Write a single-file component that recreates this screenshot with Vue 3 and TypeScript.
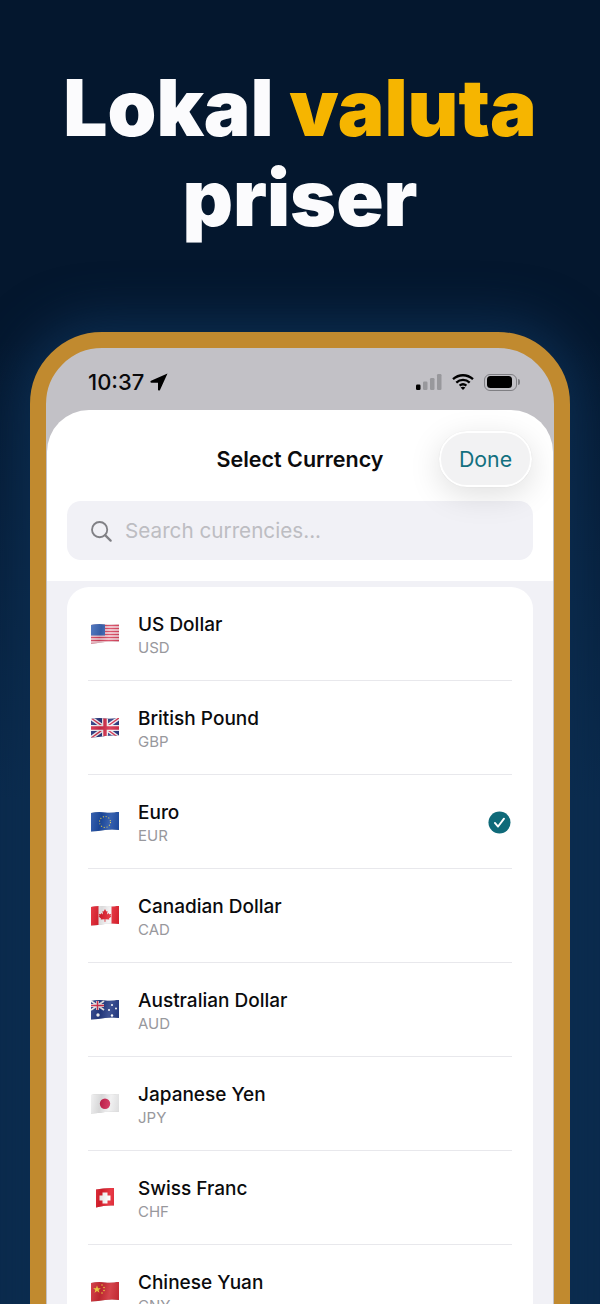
<template>
  <div class="screen">
    <h1 class="headline">Lokal <span class="accent">valuta</span><br />priser</h1>

    <div class="phone">
      <div class="status-bar">
        <div class="time">
          <span>10:37</span>
          <svg class="location" viewBox="0 0 18 18"><path d="M17.500.5 1 7.800c-1 .5-.7 2 .4 2H8v6.700c0 1.100 1.500 1.400 2 .4Z" fill="#000" /></svg>
        </div>
        <div class="status-icons">
          <svg class="signal" viewBox="0 0 26 16">
            <rect x="0" y="10.500" width="4.500" height="5.500" rx="1.200" fill="#000" />
            <rect x="7" y="7.500" width="4.500" height="8.500" rx="1.200" fill="#98989c" />
            <rect x="14" y="4" width="4.500" height="12" rx="1.200" fill="#98989c" />
            <rect x="21" y="0" width="4.500" height="16" rx="1.200" fill="#98989c" />
          </svg>
          <svg class="wifi" viewBox="0 0 22 16">
            <path d="M1 5.200C6.800-.1 15.200-.1 21 5.200M4.300 8.600C8.200 5 13.800 5 17.700 8.600M7.600 11.700c2-1.700 4.800-1.700 6.800 0" fill="none" stroke="#000" stroke-width="2.300" />
            <path d="m11 16-2.400-2.500c1.400-1 3.400-1 4.800 0Z" fill="#000" />
          </svg>
          <div class="battery"><div class="battery-fill"></div></div>
        </div>
      </div>

      <div class="sheet">
        <div class="sheet-header">
          <div class="sheet-title">Select Currency</div>
          <button class="done-button">Done</button>
        </div>
        <div class="search-wrap">
          <div class="search-box">
            <svg class="search-icon" viewBox="0 0 24 24"><circle cx="10.500" cy="10.500" r="8.300" fill="none" stroke="#808085" stroke-width="2" /><path d="m16.500 16.500 6 6" stroke="#808085" stroke-width="2.400" stroke-linecap="round" /></svg>
            <span>Search currencies...</span>
          </div>
        </div>

        <div class="list-area">
          <div class="card">
            <div v-for="item in currencies" :key="item.code" class="row">
              <div class="flag-slot" :class="{ square: item.code === 'CHF' }">
                <svg class="flag" viewBox="0 0 28 20">
                  <template v-if="item.code === 'USD'">
                    <rect width="28" height="20" fill="#f8e6ea" />
                    <path d="M0 1.500h28M0 4.500h28M0 7.500h28M0 10.500h28M0 13.500h28M0 16.500h28M0 19.500h28" stroke="#d8425c" stroke-width="1.500" />
                    <rect width="14" height="11.500" fill="#3d68b8" />
                  </template>
                  <template v-else-if="item.code === 'GBP'">
                    <rect width="28" height="20" fill="#27357e" />
                    <path d="M0 0 28 20M28 0 0 20" stroke="#f2f2f6" stroke-width="4" />
                    <path d="M0 0 28 20M28 0 0 20" stroke="#d52b49" stroke-width="1.400" />
                    <path d="M14 0v20M0 10h28" stroke="#f2f2f6" stroke-width="6" />
                    <path d="M14 0v20M0 10h28" stroke="#d52b49" stroke-width="3.400" />
                  </template>
                  <template v-else-if="item.code === 'EUR'">
                    <rect width="28" height="20" fill="#1d4da6" />
                    <circle cx="14" cy="10" r="5.500" fill="none" stroke="#d8c650" stroke-width="1.100" stroke-dasharray="1.100 1.780" />
                  </template>
                  <template v-else-if="item.code === 'CAD'">
                    <rect width="28" height="20" fill="#f5f4f5" />
                    <rect width="7.500" height="20" fill="#e3202e" />
                    <rect x="20.500" width="7.500" height="20" fill="#e3202e" />
                    <path d="M14 3 15.300 5.600 16.500 5 16 8.600 17.600 7 18.200 8.300 20.200 7.900 19.500 10.100 20.400 10.600 18 12.600 18.300 13.600 14.400 13.200 14.500 15.800H13.500L13.600 13.200 9.700 13.600 10 12.600 7.600 10.600 8.500 10.100 7.800 7.900 9.800 8.300 10.400 7 12 8.600 11.500 5 12.700 5.600Z" fill="#e3202e" />
                  </template>
                  <template v-else-if="item.code === 'AUD'">
                    <rect width="28" height="20" fill="#233a85" />
                    <path d="M0 1 13 10M13 1 0 10" stroke="#eee" stroke-width="1.800" />
                    <path d="M6.500 1v9M0 5.500h13" stroke="#eee" stroke-width="2.800" />
                    <path d="M6.500 1v9M0 5.500h13" stroke="#d52b49" stroke-width="1.400" />
                    <circle cx="7" cy="15" r="1.700" fill="#fff" />
                    <circle cx="21" cy="5" r="1" fill="#fff" />
                    <circle cx="25" cy="8.500" r="1" fill="#fff" />
                    <circle cx="18" cy="10" r="1" fill="#fff" />
                    <circle cx="21" cy="15.500" r="1.200" fill="#fff" />
                  </template>
                  <template v-else-if="item.code === 'JPY'">
                    <rect width="28" height="20" fill="#efeff0" />
                    <circle cx="14" cy="9.800" r="5.200" fill="#cf2452" />
                  </template>
                  <template v-else-if="item.code === 'CHF'">
                    <rect width="28" height="20" fill="#e5202e" />
                    <path d="M11.500 4.500h5v3h3v5h-3v3h-5v-3h-3v-5h3Z" fill="#fff" />
                  </template>
                  <template v-else>
                    <rect width="28" height="20" fill="#cf2a33" />
                    <path d="m6 3.500 1 2.800h2.900l-2.300 1.700.9 2.800L6 9.100l-2.500 1.700.9-2.800-2.300-1.700H5Z" fill="#f6d33c" />
                    <circle cx="11" cy="3" r=".8" fill="#f6d33c" />
                    <circle cx="13" cy="5.500" r=".8" fill="#f6d33c" />
                    <circle cx="13" cy="8.500" r=".8" fill="#f6d33c" />
                    <circle cx="11" cy="11" r=".8" fill="#f6d33c" />
                  </template>
                </svg>
              </div>
              <div class="row-text">
                <div class="row-name">{{ item.name }}</div>
                <div class="row-code">{{ item.code }}</div>
              </div>
              <svg v-if="item.code === selected" class="check" viewBox="0 0 24 24">
                <circle cx="12" cy="12" r="11.500" fill="#0f6a79" />
                <path d="m7.200 12.500 3.300 3.700 6.200-8.200" fill="none" stroke="#fff" stroke-width="2" stroke-linecap="round" stroke-linejoin="round" />
              </svg>
            </div>
          </div>
        </div>
      </div>
    </div>
  </div>
</template>

<script setup lang="ts">
import { ref } from 'vue';

const selected = ref('EUR');

const currencies = [
  { name: 'US Dollar', code: 'USD' },
  { name: 'British Pound', code: 'GBP' },
  { name: 'Euro', code: 'EUR' },
  { name: 'Canadian Dollar', code: 'CAD' },
  { name: 'Australian Dollar', code: 'AUD' },
  { name: 'Japanese Yen', code: 'JPY' },
  { name: 'Swiss Franc', code: 'CHF' },
  { name: 'Chinese Yuan', code: 'CNY' }
];
</script>

<style>
html,
body {
  margin: 0;
  background: #04172e;
}
</style>

<style scoped>
.screen {
  width: 600px;
  height: 1304px;
  overflow: hidden;
  background: linear-gradient(to bottom, #04172e 340px, #0a2a4c 800px);
  font-family: Inter, "Liberation Sans", sans-serif;
  display: flex;
  flex-direction: column;
  align-items: center;
}

.headline {
  margin: 63px 0 0;
  font-size: 78.300px;
  line-height: 90px;
  font-weight: 900;
  color: #fbfbfd;
  text-align: center;
  white-space: nowrap;
}

.accent {
  color: #f6b500;
}

.phone {
  box-sizing: border-box;
  width: 540px;
  flex: none;
  height: 1100px;
  margin-top: 89px;
  border: 16px solid #c18a2f;
  border-radius: 72px;
  background: #c2c1c6;
  box-shadow: 0 0 50px 12px #0c2d50;
  overflow: hidden;
}

.status-bar {
  height: 62px;
  display: flex;
  align-items: center;
  justify-content: space-between;
  padding: 6px 37px 0 42px;
  box-sizing: border-box;
}

.time {
  display: flex;
  align-items: center;
  gap: 6px;
  font-size: 22px;
  font-weight: 500;
  color: #0a0a0c;
}

.location {
  width: 18px;
  height: 18px;
}

.status-icons {
  display: flex;
  align-items: center;
  gap: 10px;
}

.signal {
  width: 26px;
  height: 16px;
}

.wifi {
  width: 22px;
  height: 16px;
}

.battery {
  position: relative;
  box-sizing: border-box;
  width: 33px;
  height: 17px;
  border: 1.500px solid #7f7f83;
  border-radius: 6px;
  padding: 1.500px;
}

.battery::after {
  content: "";
  position: absolute;
  right: -4px;
  top: 4px;
  width: 2px;
  height: 6px;
  border-radius: 0 2px 2px 0;
  background: #7f7f83;
}

.battery-fill {
  height: 100%;
  width: 90%;
  background: #000;
  border-radius: 3.500px;
}

.sheet {
  margin: 0 1px;
  background: #fff;
  border-radius: 42px 42px 0 0;
  overflow: hidden;
}

.sheet-header {
  position: relative;
  height: 91px;
  display: flex;
  align-items: center;
  justify-content: center;
  padding-top: 7px;
  box-sizing: border-box;
}

.sheet-title {
  font-size: 21.500px;
  font-weight: 600;
  color: #0b0b0d;
}

.done-button {
  position: absolute;
  left: 392px;
  top: 21px;
  width: 93px;
  height: 56px;
  border: 2px solid #fff;
  border-radius: 28px;
  background: #f2f2f3;
  box-shadow: 0 0 1px rgba(0, 0, 0, 0.12), 0 8px 32px rgba(0, 0, 0, 0.13);
  color: #12707f;
  font-family: inherit;
  font-size: 21.300px;
  font-weight: 400;
  padding: 0;
}

.search-wrap {
  padding: 0 20px 21px;
}

.search-box {
  height: 59px;
  display: flex;
  align-items: center;
  gap: 13px;
  padding-left: 23px;
  border-radius: 14px;
  background: #f1f1f6;
  color: #bdbdc2;
  font-size: 20.700px;
}

.search-icon {
  width: 22px;
  height: 22px;
}

.list-area {
  background: #f1f1f6;
  padding: 6px 20px 0;
}

.card {
  background: #fff;
  border-radius: 22px 22px 0 0;
  padding: 0 21px;
}

.row {
  box-sizing: border-box;
  height: 94px;
  display: flex;
  align-items: center;
  border-bottom: 1.500px solid #e8e8ec;
}

.flag-slot {
  position: relative;
  width: 50px;
  height: 20px;
  flex: none;
  filter: drop-shadow(0 0.500px 0.500px rgba(0, 0, 0, 0.25));
}

.flag,
.flag-slot::after {
  clip-path: path("M0 1.500Q7 0 14 1T28 0V18.500Q21 17.500 14 18.500T0 20Z");
}

.flag {
  display: block;
  width: 28px;
  height: 20px;
  margin-left: 3px;
}

/* the soft fold across the emoji flags */
.flag-slot::after {
  content: "";
  position: absolute;
  left: 3px;
  top: 0;
  width: 28px;
  height: 20px;
  background: linear-gradient(100deg, rgba(255, 255, 255, 0.12), rgba(0, 0, 0, 0.1) 35%, rgba(255, 255, 255, 0.12) 65%, rgba(0, 0, 0, 0.08));
}

.flag-slot.square .flag,
.flag-slot.square::after {
  clip-path: path("M5 2Q14 0 23 .500V18Q14 17.500 5 20Z");
}

.row-text {
  flex: 1;
  display: flex;
  flex-direction: column;
  padding-top: 3px;
}

.row-name {
  font-size: 19px;
  font-weight: 500;
  line-height: 26px;
  color: #0b0b0d;
}

.row-code {
  font-size: 15px;
  line-height: 20px;
  color: #98989d;
}

.check {
  width: 23px;
  height: 23px;
  flex: none;
  margin: 2px 1px 0 0;
}
</style>
